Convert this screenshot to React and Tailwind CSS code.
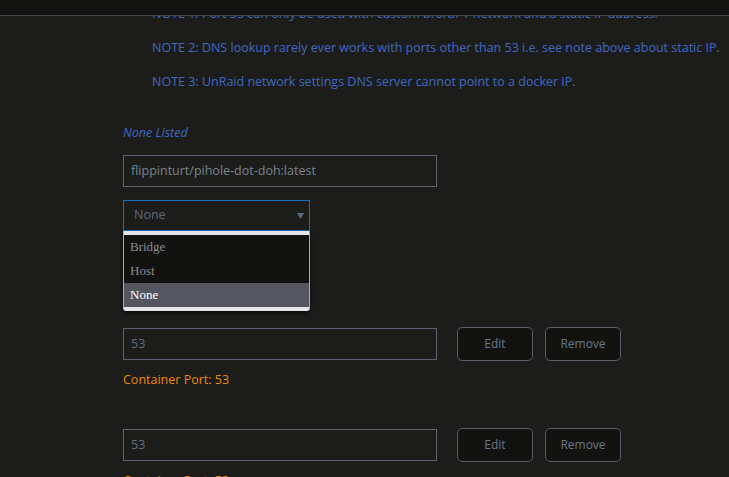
const notes = [
  "NOTE 1: Port 53 can only be used with custom br0/bPT network and a static IP address.",
  "NOTE 2: DNS lookup rarely ever works with ports other than 53 i.e. see note above about static IP.",
  "NOTE 3: UnRaid network settings DNS server cannot point to a docker IP.",
];

function PortRow({ value, className = "" }) {
  return (
    <div className={className}>
      <div className="flex items-center">
        <div className="w-[314px] h-[32px] border border-[#59636f] flex items-center pl-[7px] text-[12.5px] text-[#5f6c7a]">
          {value}
        </div>
        <button className="ml-[20px] w-[76px] h-[34px] rounded-[5px] border border-[#555e69] bg-[#121311] text-[12px] text-[#687889]">
          Edit
        </button>
        <button className="ml-[12px] w-[76px] h-[34px] rounded-[5px] border border-[#555e69] bg-[#121311] text-[12px] text-[#687889]">
          Remove
        </button>
      </div>
      <div className="mt-[10px] leading-[18px] text-[12.5px] text-[#e8890c]">Container Port: {value}</div>
    </div>
  );
}

export default function App() {
  return (
    <div className="relative w-[729px] h-[477px] overflow-hidden bg-[#1c1d1b] font-['Open_Sans',sans-serif]">
      {/* sticky top bar over the scrolled form */}
      <div className="absolute inset-x-0 top-0 z-10 h-[16px] bg-[#131412] border-b border-[#484848]" />

      <div className="flex flex-col">
        <div className="mt-[-3px] pl-[152px]">
          {notes.map((n) => (
            <p key={n} className="leading-[34px] text-[12.5px] text-[#4068c2] whitespace-nowrap">
              {n}
            </p>
          ))}
        </div>

        <div className="pl-[123px]">
          <div className="mt-[25px] leading-[18px] text-[12.5px] italic text-[#4068c2]">None Listed</div>

          <div className="mt-[13px] w-[314px] h-[32px] border border-[#59636f] flex items-center pl-[7px] text-[12.5px] text-[#7b838c]">
            flippinturt/pihole-dot-doh:latest
          </div>

          <div className="relative mt-[13px] w-[187px]">
            <div className="h-[31px] border border-[#1170c0] flex items-center justify-between pl-[10px] pr-[5px] text-[12.5px] text-[#5d6a78]">
              <span>None</span>
              <svg width="7" height="6" viewBox="0 0 7 6" className="mt-[1px]">
                <path d="M0 0H7L3.5 6Z" fill="#5d6a78" />
              </svg>
            </div>

            {/* open options list */}
            <div className="absolute left-0 top-[31px] z-20 w-[187px] rounded-b-[3px] border-x border-[#a9a9ae] bg-[#e6e6ea] py-[4px] shadow-[0_2px_4px_rgba(0,0,0,0.6)] font-['Liberation_Serif',serif] text-[13px]">
              <div className="h-[24px] flex items-center pl-[6px] bg-[#121311] text-[#868b92]">Bridge</div>
              <div className="h-[24px] flex items-center pl-[6px] bg-[#121311] text-[#868b92]">Host</div>
              <div className="h-[24px] flex items-center pl-[6px] bg-[#55555f] text-white">None</div>
            </div>
          </div>

          <PortRow value="53" className="mt-[96px]" />
          <PortRow value="53" className="mt-[39px]" />
        </div>
      </div>
    </div>
  );
}
